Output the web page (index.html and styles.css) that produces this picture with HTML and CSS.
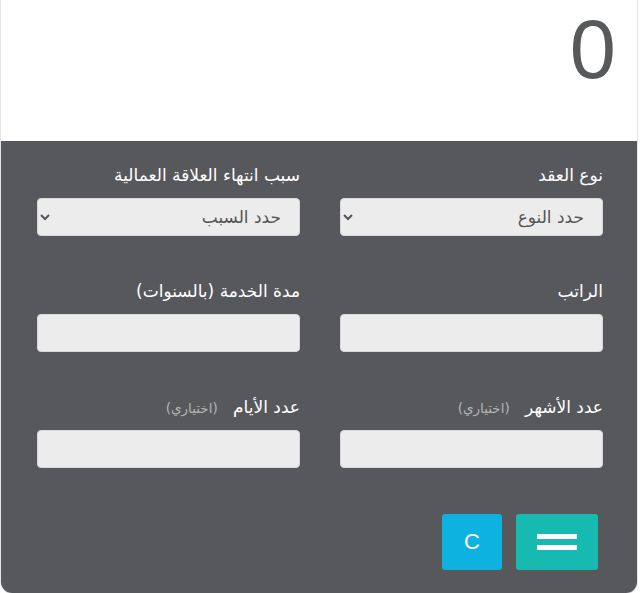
FILE: index.html
```html
<!DOCTYPE html>
<html lang="ar">
<head>
    <meta charset="UTF-8">
    <meta name="viewport" content="width=device-width, initial-scale=1.0">
    <title>حاسبة نهاية الخدمة</title>
    <link rel="stylesheet" href="styles.css">
</head>
<body>
<div class="calc">
    <div class="display">0</div>
    <div class="panel">
        <div class="fields">
            <div class="field">
                <label for="type">نوع العقد</label>
                <select id="type">
                    <option>حدد النوع</option>
                </select>
            </div>
            <div class="field">
                <label for="reason">سبب انتهاء العلاقة العمالية</label>
                <select id="reason">
                    <option>حدد السبب</option>
                </select>
            </div>
            <div class="field">
                <label for="salary">الراتب</label>
                <input type="text" id="salary">
            </div>
            <div class="field">
                <label for="years">مدة الخدمة (بالسنوات)</label>
                <input type="text" id="years">
            </div>
            <div class="field">
                <label for="months">عدد الأشهر <span class="opt">(اختياري)</span></label>
                <input type="text" id="months">
            </div>
            <div class="field">
                <label for="days">عدد الأيام <span class="opt">(اختياري)</span></label>
                <input type="text" id="days">
            </div>
        </div>
        <div class="buttons">
            <button class="btn equal"><span class="bar"></span><span class="bar"></span></button>
            <button class="btn clear">C</button>
        </div>
    </div>
</div>
</body>
</html>
```

FILE: styles.css
```css
body {
    margin: 0;
    padding: 0;
    background: #fff;
    font-family: "DejaVu Sans", "Liberation Sans", sans-serif;
}

.calc {
    width: 636px;
    border: 1px solid #e4e4e4;
    border-top: 0;
    border-radius: 0 0 12px 12px;
    overflow: hidden;
}

.display {
    height: 141px;
    box-sizing: border-box;
    padding: 0 21px 0 0;
    text-align: right;
    font-family: "Liberation Sans", Arial, sans-serif;
    font-size: 83px;
    line-height: 100px;
    color: #58595b;
}

.panel {
    background-color: #57585c;
    padding: 22px 34px 23px 36px;
    direction: rtl;
}

.fields {
    display: grid;
    grid-template-columns: 1fr 1fr;
    column-gap: 40px;
    row-gap: 43px;
}

.field label {
    display: block;
    height: 24px;
    line-height: 24px;
    margin-bottom: 11px;
    color: #fff;
    font-size: 17px;
}

.opt {
    color: #b4b4b4;
    font-size: 13.5px;
    margin-right: 10px;
}

.field input,
.field select {
    display: block;
    width: 100%;
    height: 38px;
    box-sizing: border-box;
    border: 1px solid #d8d8d8;
    border-radius: 4px;
    background-color: #ececec;
    font-family: "DejaVu Sans", sans-serif;
    font-size: 17px;
    color: #555;
    padding: 0 14px;
    direction: rtl;
}

.buttons {
    display: flex;
    gap: 14px;
    margin-top: 46px;
    padding-right: 5px;
}

.btn {
    height: 56px;
    border: 0;
    border-radius: 3px;
    color: #fff;
    cursor: pointer;
}

.equal {
    width: 82px;
    background-color: #17bab0;
    display: flex;
    flex-direction: column;
    align-items: center;
    justify-content: center;
    gap: 6px;
}

.bar {
    display: block;
    width: 40px;
    height: 5px;
    background: #fff;
}

.clear {
    width: 60px;
    background-color: #0db2e0;
    font-family: "Liberation Sans", Arial, sans-serif;
    font-size: 22px;
}
```
